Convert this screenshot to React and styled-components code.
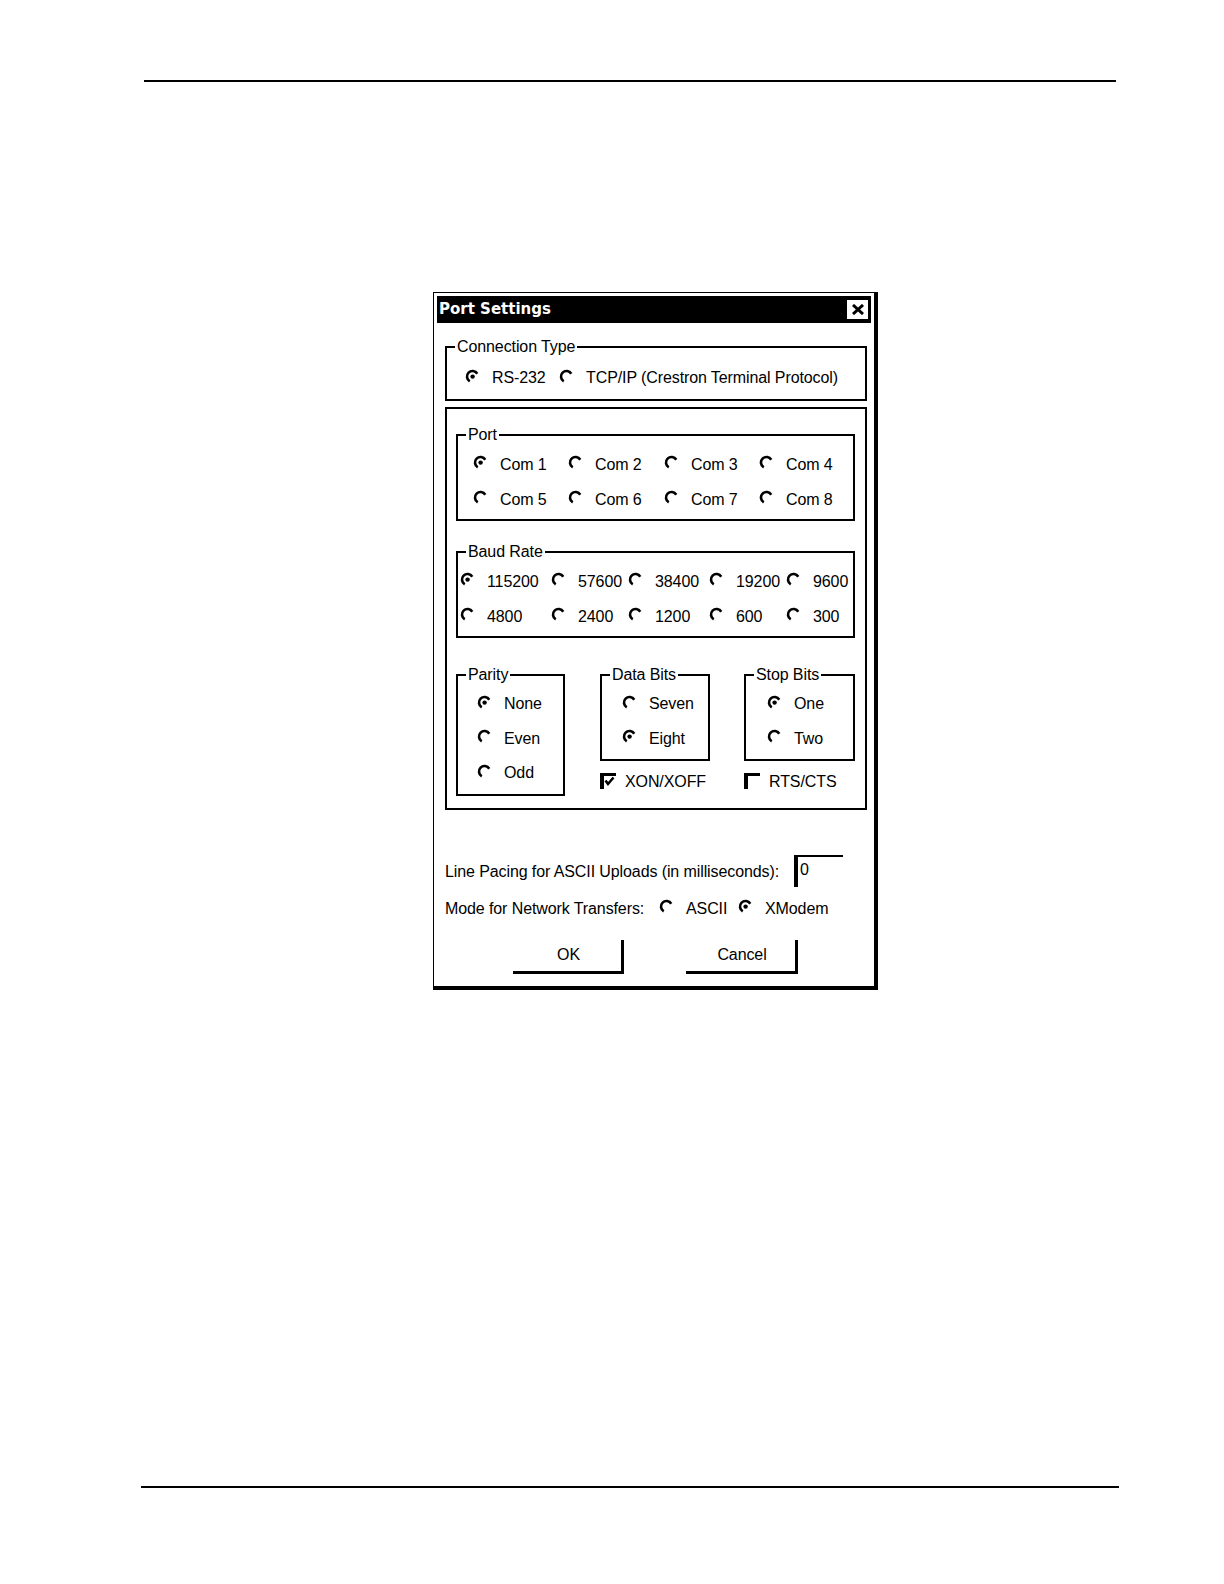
import React from 'react';
import styled, { createGlobalStyle } from 'styled-components';

const Global = createGlobalStyle`
  html, body { margin: 0; padding: 0; background: #fff; }
  body {
    font-family: "Liberation Sans", Arial, sans-serif;
    color: #000;
  }
`;

const Page = styled.div`
  width: 1224px;
  height: 1584px;
  box-sizing: border-box;
  padding-top: 80px;
  display: flex;
  flex-direction: column;
  background: #fff;
`;

const Rule = styled.div`
  height: 2px;
  background: #000;
  margin-left: ${(p) => p.$left}px;
  width: ${(p) => p.$width}px;
  margin-top: ${(p) => p.$top || 0}px;
`;

const Dialog = styled.div`
  margin: 210px 0 0 433px;
  width: 445px;
  box-sizing: border-box;
  border-style: solid;
  border-color: #000;
  border-width: 1px 4px 4px 1px;
  padding: 3px;
  background: #fff;
`;

const TitleBar = styled.div`
  height: 27px;
  background: #000;
  display: flex;
  align-items: center;
  justify-content: space-between;
  padding: 0 3px 0 2px;
`;

const Title = styled.span`
  color: #fff;
  font-family: "DejaVu Sans", "Liberation Sans", sans-serif;
  font-weight: bold;
  font-size: 15px;
  line-height: 27px;
`;

const CloseBox = styled.span`
  width: 21px;
  height: 19px;
  background: #fff;
  display: flex;
  align-items: center;
  justify-content: center;
`;

const Body = styled.div`
  padding: 14px 4px 9px 8px;
  display: flex;
  flex-direction: column;
`;

const Group = styled.fieldset`
  flex: none;
  margin: ${(p) => p.$mt || 0}px 0 0 0;
  border: 2px solid #000;
  padding: 0;
  min-width: 0;
  box-sizing: border-box;
  width: ${(p) => (p.$w ? `${p.$w}px` : 'auto')};
`;

const Legend = styled.legend`
  padding: 0 2px;
  margin-left: 8px;
  font-size: 16px;
  line-height: 20px;
  letter-spacing: -0.1px;
  white-space: nowrap;
`;

const Content = styled.div`
  padding: ${(p) => p.$pad};
`;

const Frame = styled.div`
  margin-top: 6px;
  border: 2px solid #000;
  padding: 0 10px 12px 9px;
  display: flex;
  flex-direction: column;
`;

const Row = styled.div`
  display: flex;
  align-items: center;
  height: 22px;
`;

const Grid = styled.div`
  display: grid;
  grid-template-columns: ${(p) => p.$cols};
  grid-auto-rows: ${(p) => p.$rowH}px;
  align-items: center;
`;

const Stack = styled.div`
  flex: none;
  width: ${(p) => p.$w}px;
  margin-left: ${(p) => p.$ml}px;
  display: flex;
  flex-direction: column;
`;

const OptionWrap = styled.span`
  display: inline-flex;
  align-items: center;
  gap: ${(p) => p.$gap}px;
  width: ${(p) => (p.$w ? `${p.$w}px` : 'auto')};
  font-size: 16px;
  line-height: 22px;
  letter-spacing: -0.1px;
  white-space: nowrap;
`;

const Glyph = styled.svg`
  flex: none;
  margin-bottom: ${(p) => p.$lift}px;
`;

const Text = styled.span`
  font-size: 16px;
  line-height: 22px;
  letter-spacing: -0.1px;
  white-space: nowrap;
  flex: none;
  width: ${(p) => (p.$w ? `${p.$w}px` : 'auto')};
  margin-top: ${(p) => p.$mt || 0}px;
`;

const GroupsRow = styled.div`
  display: flex;
  align-items: flex-start;
  margin-top: 27px;
`;

const CheckRow = styled.div`
  display: flex;
  align-items: center;
  height: 22px;
  margin-top: 10px;
`;

const PacingRow = styled.div`
  display: flex;
  align-items: flex-start;
  justify-content: space-between;
  margin-top: 45px;
  padding-right: 24px;
`;

const Field = styled.div`
  flex: none;
  width: 49px;
  height: 32px;
  box-sizing: border-box;
  border-left: 4px solid #000;
  border-top: 2px solid #000;
  padding: 3px 0 0 2px;
  font-size: 16px;
  line-height: 20px;
`;

const ModeRow = styled.div`
  display: flex;
  align-items: center;
  height: 22px;
  margin-top: 11px;
`;

const Buttons = styled.div`
  display: flex;
  gap: 62px;
  margin: 20px 0 0 68px;
`;

const Button = styled.div`
  width: ${(p) => p.$w}px;
  height: 34px;
  box-sizing: border-box;
  border-right: 3px solid #000;
  border-bottom: 3px solid #000;
  display: flex;
  align-items: center;
  justify-content: center;
  font-size: 16px;
  letter-spacing: -0.1px;
  padding-left: 3px;
`;

const Radio = ({ checked, label, w }) => (
  <OptionWrap $w={w} $gap={12}>
    <Glyph $lift={4} width="15" height="15" viewBox="0 0 15 15">
      <path
        d="M4.75 12.26 A5.5 5.5 0 1 1 12.26 4.75"
        fill="none"
        stroke="#000"
        strokeWidth="2.6"
      />
      {checked && <circle cx="7.6" cy="7.6" r="2.2" fill="#000" />}
    </Glyph>
    {label}
  </OptionWrap>
);

const Check = ({ checked, label }) => (
  <OptionWrap $gap={9}>
    <Glyph $lift={2} width="16" height="16" viewBox="0 0 16 16">
      <rect x="0" y="0" width="4" height="16" fill="#000" />
      <rect x="0" y="0" width="16" height="3" fill="#000" />
      {checked && (
        <polyline points="5.5,7.5 8,11 13.5,4.5" fill="none" stroke="#000" strokeWidth="2.6" />
      )}
    </Glyph>
    {label}
  </OptionWrap>
);

export default function App() {
  return (
    <>
      <Global />
      <Page>
        <Rule $left={144} $width={972} />
        <Dialog>
          <TitleBar>
            <Title>Port Settings</Title>
            <CloseBox>
              <svg width="12" height="11" viewBox="0 0 12 11">
                <path d="M1 1 L11 10 M11 1 L1 10" stroke="#000" strokeWidth="3" />
              </svg>
            </CloseBox>
          </TitleBar>
          <Body>
            <Group>
              <Legend>Connection Type</Legend>
              <Content $pad="10px 0 10px 18px">
                <Row>
                  <Radio checked label="RS-232" w={94} />
                  <Radio label="TCP/IP (Crestron Terminal Protocol)" />
                </Row>
              </Content>
            </Group>

            <Frame>
              <Group $mt={16}>
                <Legend>Port</Legend>
                <Content $pad="2px 0 2px 15px">
                  <Grid $cols="95px 96px 95px auto" $rowH={35}>
                    <Radio checked label="Com 1" />
                    <Radio label="Com 2" />
                    <Radio label="Com 3" />
                    <Radio label="Com 4" />
                    <Radio label="Com 5" />
                    <Radio label="Com 6" />
                    <Radio label="Com 7" />
                    <Radio label="Com 8" />
                  </Grid>
                </Content>
              </Group>

              <Group $mt={21}>
                <Legend>Baud Rate</Legend>
                <Content $pad="2px 0 2px 2px">
                  <Grid $cols="91px 77px 81px 77px auto" $rowH={35}>
                    <Radio checked label="115200" />
                    <Radio label="57600" />
                    <Radio label="38400" />
                    <Radio label="19200" />
                    <Radio label="9600" />
                    <Radio label="4800" />
                    <Radio label="2400" />
                    <Radio label="1200" />
                    <Radio label="600" />
                    <Radio label="300" />
                  </Grid>
                </Content>
              </Group>

              <GroupsRow>
                <Group $w={109}>
                  <Legend>Parity</Legend>
                  <Content $pad="2px 0 3px 19px">
                    <Grid $cols="auto" $rowH={34.5}>
                      <Radio checked label="None" />
                      <Radio label="Even" />
                      <Radio label="Odd" />
                    </Grid>
                  </Content>
                </Group>
                <Stack $w={110} $ml={35}>
                  <Group $w={110}>
                    <Legend>Data Bits</Legend>
                    <Content $pad="2px 0 3px 20px">
                      <Grid $cols="auto" $rowH={34.5}>
                        <Radio label="Seven" />
                        <Radio checked label="Eight" />
                      </Grid>
                    </Content>
                  </Group>
                  <CheckRow>
                    <Check checked label="XON/XOFF" />
                  </CheckRow>
                </Stack>
                <Stack $w={111} $ml={34}>
                  <Group $w={111}>
                    <Legend>Stop Bits</Legend>
                    <Content $pad="2px 0 3px 21px">
                      <Grid $cols="auto" $rowH={34.5}>
                        <Radio checked label="One" />
                        <Radio label="Two" />
                      </Grid>
                    </Content>
                  </Group>
                  <CheckRow>
                    <Check label="RTS/CTS" />
                  </CheckRow>
                </Stack>
              </GroupsRow>
            </Frame>

            <PacingRow>
              <Text $mt={6}>Line Pacing for ASCII Uploads (in milliseconds):</Text>
              <Field>0</Field>
            </PacingRow>

            <ModeRow>
              <Text $w={214}>Mode for Network Transfers:</Text>
              <Radio label="ASCII" w={79} />
              <Radio checked label="XModem" />
            </ModeRow>

            <Buttons>
              <Button $w={111}>OK</Button>
              <Button $w={112}>Cancel</Button>
            </Buttons>
          </Body>
        </Dialog>
        <Rule $left={141} $width={978} $top={496} />
      </Page>
    </>
  );
}
